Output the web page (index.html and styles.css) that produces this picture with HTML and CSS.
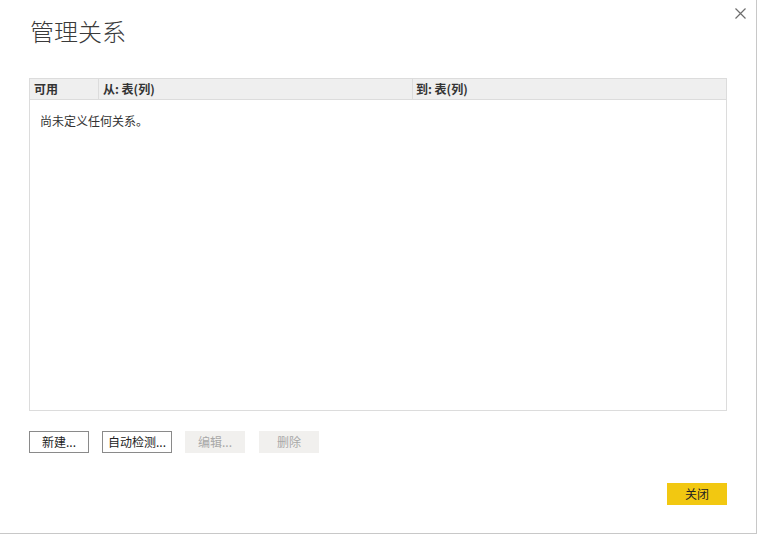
FILE: index.html
```html
<!DOCTYPE html>
<html lang="zh-CN">
<head>
  <meta charset="UTF-8">
  <title>管理关系</title>
  <link rel="stylesheet" href="styles.css">
</head>
<body>
  <div class="dialog">
    <!-- close icon -->
    <button class="close-x" aria-label="关闭">
      <svg width="11" height="11" viewBox="0 0 11 11">
        <path d="M0.5 0.5 L10.5 10.5 M10.5 0.5 L0.5 10.5" stroke="#6d6d6d" stroke-width="1.2" fill="none"/>
      </svg>
    </button>

    <h1 class="title">管理关系</h1>

    <div class="grid">
      <div class="grid-head">
        <div class="col col-active">可用</div>
        <div class="col col-from">从: 表(列)</div>
        <div class="col col-to">到: 表(列)</div>
      </div>
      <div class="grid-body">
        <p class="empty">尚未定义任何关系。</p>
      </div>
    </div>

    <div class="actions">
      <button class="btn">新建...</button>
      <button class="btn btn-wide">自动检测...</button>
      <button class="btn btn-disabled" disabled>编辑...</button>
      <button class="btn btn-disabled btn-last" disabled>删除</button>
    </div>

    <div class="footer">
      <button class="btn btn-primary">关闭</button>
    </div>
  </div>
</body>
</html>
```

FILE: styles.css
```css
body {
  margin: 0;
  background: #fff;
  font-family: "Noto Sans CJK SC", "Noto Sans", sans-serif;
  color: #333;
}

.dialog {
  position: relative;
  width: 757px;
  height: 534px;
  border-right: 1px solid #c8c8c8;
  border-bottom: 1px solid #c8c8c8;
  display: flex;
  flex-direction: column;
  padding-left: 29px;
  box-sizing: border-box;
}

.close-x {
  position: absolute;
  top: 8px;
  left: 735px;
  width: 11px;
  height: 11px;
  padding: 0;
  border: none;
  background: none;
  line-height: 0;
}

.title {
  margin: 15px 0 0 1px;
  font-size: 24px;
  line-height: 32px;
  font-weight: 300;
  color: #3a3a3a;
}

.grid {
  margin-top: 31px;
  width: 696px;
  height: 331px;
  border: 1px solid #dcdcdc;
  display: flex;
  flex-direction: column;
  flex-shrink: 0;
}

.grid-head {
  display: flex;
  height: 20px;
  background: #efefef;
  border-bottom: 1px solid #dcdcdc;
  font-size: 12px;
  font-weight: bold;
  line-height: 20px;
  color: #333;
}

.col {
  padding-left: 4px;
  box-sizing: border-box;
}

.col-active {
  width: 69px;
  border-right: 1px solid #dcdcdc;
}

.col-from {
  width: 314px;
  border-right: 1px solid #dcdcdc;
}

.col-to {
  flex: 1;
  padding-left: 3px;
}

.grid-body {
  flex: 1;
}

.empty {
  margin: 13px 0 0 10px;
  font-size: 12px;
  line-height: 16px;
  color: #333;
}

.actions {
  display: flex;
  gap: 13px;
  margin-top: 20px;
}

.btn {
  width: 60px;
  height: 22px;
  padding: 0;
  border: 1px solid #8a8a8a;
  background: #fff;
  font-family: "Noto Sans CJK SC", "Noto Sans", sans-serif;
  font-size: 12px;
  line-height: 18px;
  color: #222;
}

.btn-wide {
  width: 70px;
}

.btn-disabled {
  border-color: #f1f0ee;
  background: #f1f0ee;
  color: #a8a8a8;
}

.btn-last {
  margin-left: 1px;
}

.footer {
  display: flex;
  justify-content: flex-end;
  width: 698px;
  margin-top: 30px;
}

.btn-primary {
  border-color: #f2c811;
  background: #f2c811;
  color: #222;
}
```
